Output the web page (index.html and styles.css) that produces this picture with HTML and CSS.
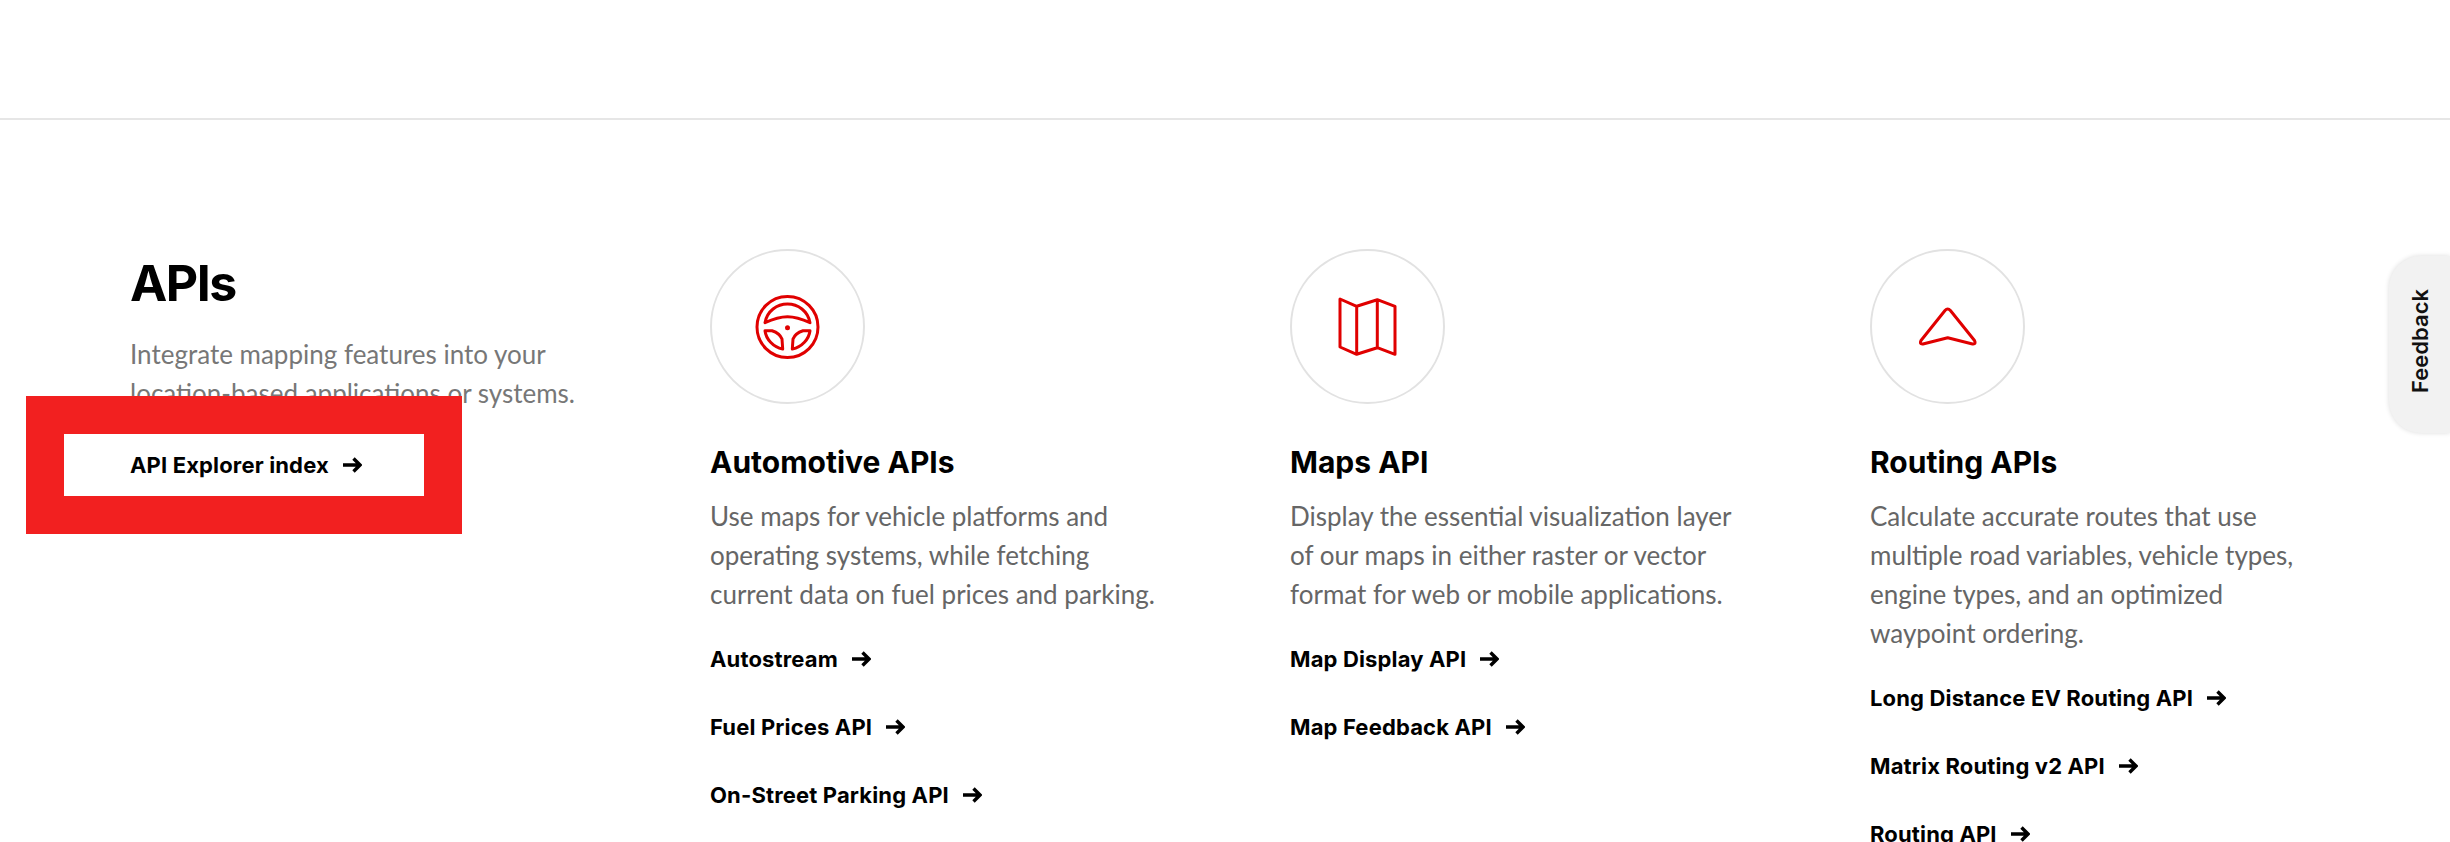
FILE: index.html
```html
<!DOCTYPE html>
<html lang="en">
<head>
<meta charset="utf-8">
<title>APIs</title>
<link rel="stylesheet" href="styles.css">
</head>
<body>
<svg class="sprite" aria-hidden="true">
  <symbol id="arrow" viewBox="0 0 20 16"><path d="M1 8H18M11.500 1.500L18 8l-6.500 6.500" fill="none" stroke="currentColor" stroke-width="3.400"/></symbol>
</svg>
<div class="page">
  <header class="top"></header>
  <main class="grid">
    <section class="intro">
      <h1 class="intro-title">APIs</h1>
      <p class="intro-text">Integrate mapping features into your location-based applications or systems.</p>
      <a class="link explorer" href="#">API Explorer index<svg class="arrow"><use href="#arrow"/></svg></a>
    </section>
    <section class="card">
      <div class="badge">
        <svg class="icon" viewBox="0 0 155 155">
          <circle cx="77.500" cy="78" r="30.500"/>
          <path d="M55 73.700C57 62 67 55 77.500 55S98 62 100 73.700C92 70 85 67.700 77.500 67.700S63 70 55 73.700Z"/>
          <path d="M55 81.700H62C66 83 70.500 86 72 90L72.700 100C63 98 56 90 55 81.700Z"/>
          <path d="M100 81.700H93C89 83 84.500 86 83 90L82.300 100C92 98 99 90 100 81.700Z"/>
          <circle class="dot" cx="77.500" cy="78.700" r="2.500"/>
        </svg>
      </div>
      <h2 class="card-title">Automotive APIs</h2>
      <p class="card-text">Use maps for vehicle platforms and operating systems, while fetching current data on fuel prices and parking.</p>
      <ul class="links">
        <li><a class="link" href="#">Autostream<svg class="arrow"><use href="#arrow"/></svg></a></li>
        <li><a class="link" href="#">Fuel Prices API<svg class="arrow"><use href="#arrow"/></svg></a></li>
        <li><a class="link" href="#">On-Street Parking API<svg class="arrow"><use href="#arrow"/></svg></a></li>
      </ul>
    </section>
    <section class="card">
      <div class="badge">
        <svg class="icon" viewBox="0 0 155 155">
          <path d="M50 50L66.700 57.300L87.300 50.700L105 57.300V105.300L87.300 98.700L66.700 105.300L50 98ZM66.700 57.300V105.300M87.300 50.700V98.700"/>
        </svg>
      </div>
      <h2 class="card-title">Maps API</h2>
      <p class="card-text">Display the essential visualization layer of our maps in either raster or vector format for web or mobile applications.</p>
      <ul class="links">
        <li><a class="link" href="#">Map Display API<svg class="arrow"><use href="#arrow"/></svg></a></li>
        <li><a class="link" href="#">Map Feedback API<svg class="arrow"><use href="#arrow"/></svg></a></li>
      </ul>
    </section>
    <section class="card">
      <div class="badge">
        <svg class="icon" viewBox="0 0 155 155">
          <path d="M75 61.500Q77.700 58.500 80.400 61.500L104.500 91.500Q106.500 95.500 102.500 95L77.700 88.700L53 95Q49 95.500 51 91.500Z"/>
        </svg>
      </div>
      <h2 class="card-title">Routing APIs</h2>
      <p class="card-text">Calculate accurate routes that use multiple road variables, vehicle types, engine types, and an optimized waypoint ordering.</p>
      <ul class="links">
        <li><a class="link" href="#">Long Distance EV Routing API<svg class="arrow"><use href="#arrow"/></svg></a></li>
        <li><a class="link" href="#">Matrix Routing v2 API<svg class="arrow"><use href="#arrow"/></svg></a></li>
        <li><a class="link" href="#">Routing API<svg class="arrow"><use href="#arrow"/></svg></a></li>
      </ul>
    </section>
  </main>
  <button class="feedback" type="button"><span class="feedback-label">Feedback</span></button>
</div>
</body>
</html>
```
FILE: styles.css
```css
* { box-sizing: border-box; }
html, body { margin: 0; height: 100%; }
body { background: #fff; overflow: hidden; font-family: "Lato", sans-serif; color: #000; }
.sprite { display: none; }
.page { position: relative; height: 842px; overflow: hidden; }
.top { height: 120px; border-bottom: 2px solid #e6e6e6; }
.grid { display: grid; grid-template-columns: repeat(4, 580px); padding: 129px 0 0 130px; }
.intro { position: relative; }
.intro-title { margin: 0; padding-top: 4px; font: 700 50px/60px "Inter", sans-serif; letter-spacing: -1.500px; }
.intro-text { margin: 22px 0 0; width: 460px; font-size: 26px; line-height: 39px; color: #777; }
.link { display: inline-flex; align-items: center; gap: 13px; font: 700 22px/30px "Inter", sans-serif; letter-spacing: 0.150px; color: #000; text-decoration: none; }
.arrow { width: 20px; height: 16px; flex: none; }
.explorer { position: absolute; left: -104px; top: 147px; width: 436px; height: 138px; background: #fff; border: 38px solid #f22020; padding-left: 66px; }
.badge { width: 155px; height: 155px; border: 2px solid #e2e2e2; border-radius: 50%; display: flex; align-items: center; justify-content: center; }
.icon { flex: none; width: 155px; height: 155px; fill: none; stroke: #e00000; stroke-width: 3; stroke-linejoin: round; }
.dot { fill: #e00000; stroke: none; }
.card-title { margin: 38px 0 0; font: 700 30px/40px "Inter", sans-serif; letter-spacing: 0; }
.card-text { margin: 15px 0 0; width: 460px; font-size: 26px; line-height: 39px; color: #666; }
.links { list-style: none; margin: 30px 0 0; padding: 0; display: flex; flex-direction: column; gap: 38px; }
.feedback { position: absolute; right: 0; top: 256px; width: 61px; height: 177px; padding: 0 0 8px; border: 0; border-radius: 32px 0 0 32px; background: #f2f2f2; box-shadow: 0 0 5px rgba(0,0,0,.14); display: flex; align-items: center; justify-content: center; }
.feedback-label { writing-mode: vertical-rl; transform: rotate(180deg); font: 600 22px/28px "Inter", sans-serif; color: #111; }
```
